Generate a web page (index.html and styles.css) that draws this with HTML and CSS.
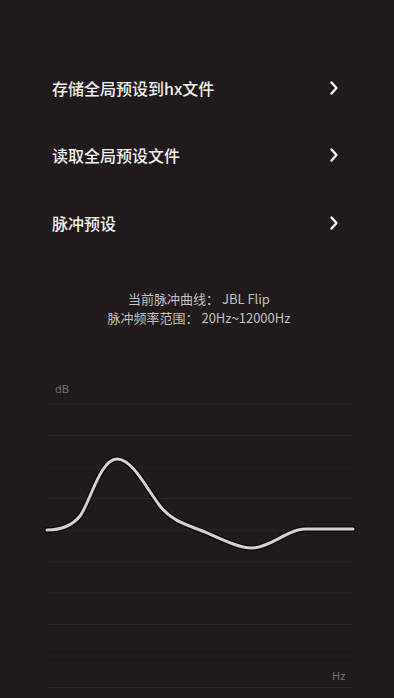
FILE: index.html
```html
<!DOCTYPE html>
<html lang="zh">
<head>
<meta charset="utf-8">
<link rel="stylesheet" href="styles.css">
</head>
<body>
<div class="page">
  <ul class="menu">
    <li class="row"><span class="label">存储全局预设到hx文件</span>
      <svg class="chev" viewBox="0 0 10 16" width="10" height="16"><path d="M2.5 2.5 L7.5 8 L2.5 13.5" fill="none" stroke="#f4f4f4" stroke-width="2.4" stroke-linecap="round" stroke-linejoin="round"/></svg></li>
    <li class="row"><span class="label">读取全局预设文件</span>
      <svg class="chev" viewBox="0 0 10 16" width="10" height="16"><path d="M2.5 2.5 L7.5 8 L2.5 13.5" fill="none" stroke="#f4f4f4" stroke-width="2.4" stroke-linecap="round" stroke-linejoin="round"/></svg></li>
    <li class="row"><span class="label">脉冲预设</span>
      <svg class="chev" viewBox="0 0 10 16" width="10" height="16"><path d="M2.5 2.5 L7.5 8 L2.5 13.5" fill="none" stroke="#f4f4f4" stroke-width="2.4" stroke-linecap="round" stroke-linejoin="round"/></svg></li>
  </ul>
  <div class="info">
    <p>当前脉冲曲线： JBL Flip</p>
    <p>脉冲频率范围： 20Hz~12000Hz</p>
  </div>
  <svg class="chart" viewBox="0 0 394 328" width="394" height="328">
    <g stroke="#2b2527" stroke-width="1">
      <line x1="47" x2="353" y1="33" y2="33"/>
      <line x1="47" x2="353" y1="64.5" y2="64.5"/>
      <line x1="47" x2="353" y1="96" y2="96"/>
      <line x1="47" x2="353" y1="127.5" y2="127.5"/>
      <line x1="47" x2="353" y1="159" y2="159"/>
      <line x1="47" x2="353" y1="190.5" y2="190.5"/>
      <line x1="47" x2="353" y1="222" y2="222"/>
      <line x1="47" x2="353" y1="253.5" y2="253.5"/>
      <line x1="47" x2="353" y1="285" y2="285"/>
      <line x1="47" x2="353" y1="316.5" y2="316.5"/>
    </g>
    <text class="axis" x="55" y="22">dB</text>
    <text class="axis" x="332" y="309">Hz</text>
    <path d="M47,159 C62,159 72,155 80,145 C90,132 100,88 117,88 C132,88 145,115 160,135 C172,150 185,153 205,161 C225,170 240,177 252,177 C265,177 280,166 290,162 C296,159 300,158 306,158 L353,158" fill="none" stroke="#0b0809" stroke-width="5.5" stroke-linecap="round"/>
    <path d="M47,159 C62,159 72,155 80,145 C90,132 100,88 117,88 C132,88 145,115 160,135 C172,150 185,153 205,161 C225,170 240,177 252,177 C265,177 280,166 290,162 C296,159 300,158 306,158 L353,158" fill="none" stroke="#dccdd0" stroke-width="3" stroke-linecap="round"/>
  </svg>
</div>
</body>
</html>
```

FILE: styles.css
```css
html, body {
  margin: 0;
  padding: 0;
  background: #201a1c;
}
.page {
  width: 394px;
  height: 698px;
  overflow: hidden;
  font-family: "Noto Sans CJK SC", "Noto Sans", sans-serif;
}
.menu {
  list-style: none;
  margin: 0;
  padding: 54px 0 0 0;
}
.row {
  height: 67.5px;
  display: flex;
  align-items: center;
  justify-content: space-between;
  padding: 0 55px 0 52px;
}
.label {
  color: #f2f2f2;
  font-size: 16px;
  font-weight: 500;
  letter-spacing: 0;
}
.chev {
  display: block;
}
.info {
  margin-top: 32.5px;
  text-align: center;
  padding-left: 4px;
}
.info p {
  margin: 0;
  font-size: 13px;
  line-height: 19px;
  color: #c4c0c1;
}
.chart {
  display: block;
  margin-top: 44px;
}
.axis {
  font-family: "Noto Sans", sans-serif;
  font-size: 11px;
  fill: #7a7476;
}
```
